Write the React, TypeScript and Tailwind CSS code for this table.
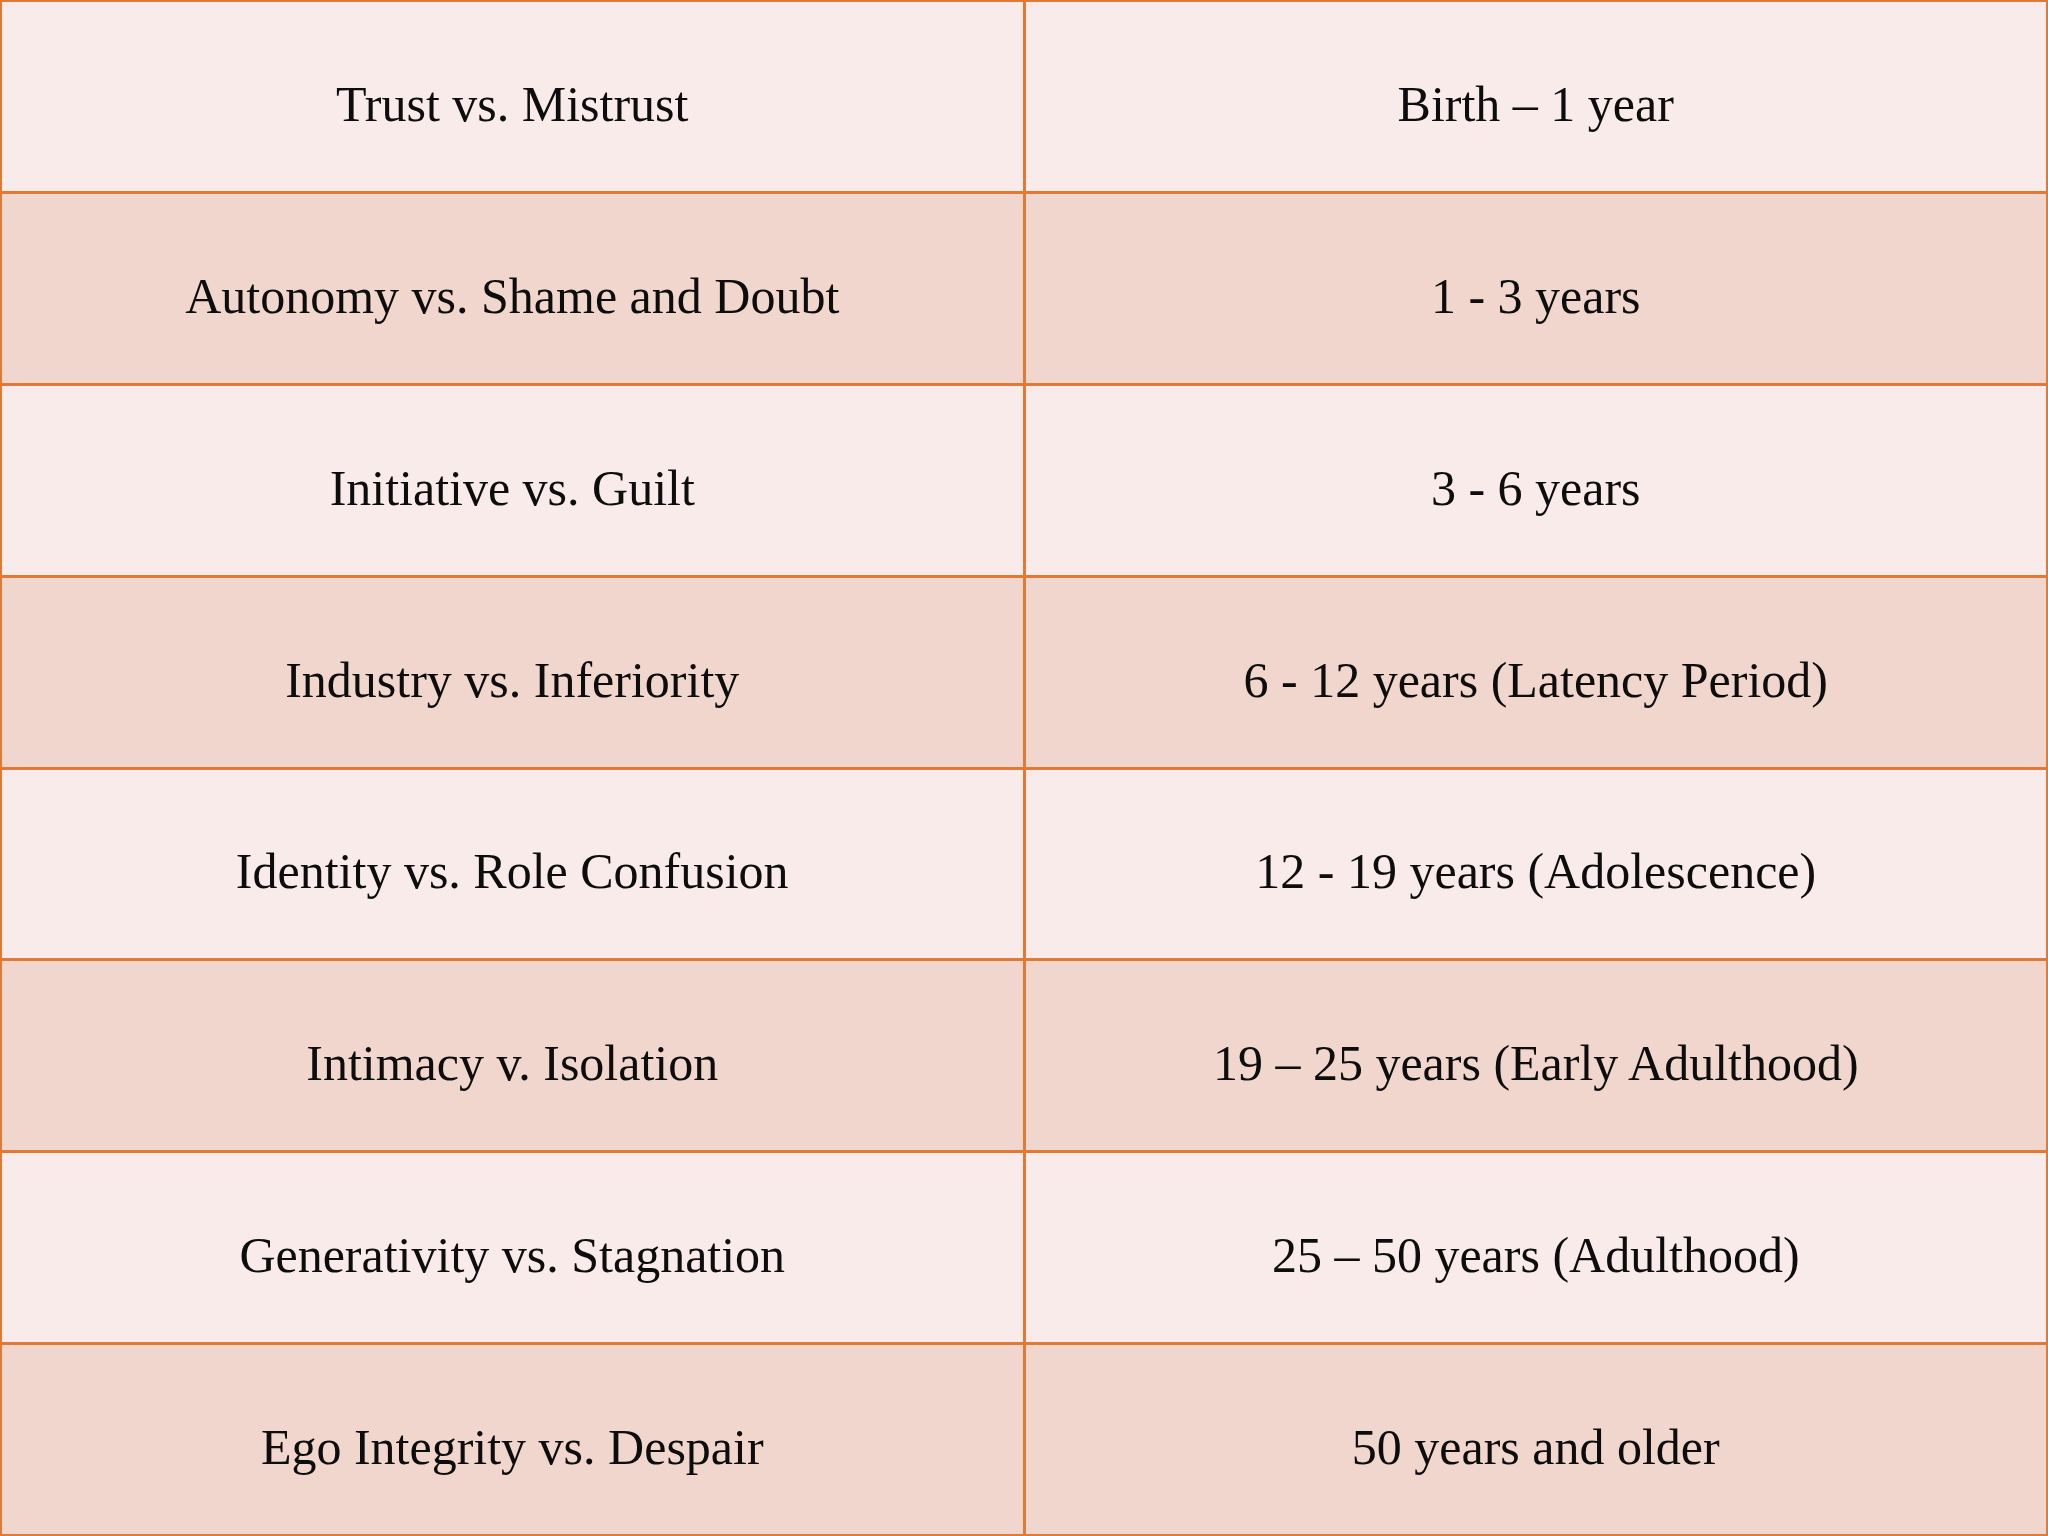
const stages: [string, string][] = [
  ["Trust vs. Mistrust", "Birth – 1 year"],
  ["Autonomy vs. Shame and Doubt", "1 - 3 years"],
  ["Initiative vs. Guilt", "3 - 6 years"],
  ["Industry vs. Inferiority", "6 - 12 years (Latency Period)"],
  ["Identity vs. Role Confusion", "12 - 19 years (Adolescence)"],
  ["Intimacy v. Isolation", "19 – 25 years (Early Adulthood)"],
  ["Generativity vs. Stagnation", "25 – 50 years (Adulthood)"],
  ["Ego Integrity vs. Despair", "50 years and older"],
];

export default function App() {
  return (
    <div
      className="w-[2048px] h-[1536px] bg-[#e07a35] p-[2px] grid grid-cols-2 grid-rows-8 gap-[3px] text-[#0d0d0d] text-[50px]"
      style={{ fontFamily: '"Liberation Serif", serif' }}
    >
      {stages.map(([stage, age], i) => {
        const bg = i % 2 === 0 ? "bg-[#f8ebea]" : "bg-[#f0d6cd]";
        return [stage, age].map((t, j) => (
          <div key={`${i}-${j}`} className={`${bg} flex items-center justify-center pt-[16px]`}>
            {t}
          </div>
        ));
      })}
    </div>
  );
}
